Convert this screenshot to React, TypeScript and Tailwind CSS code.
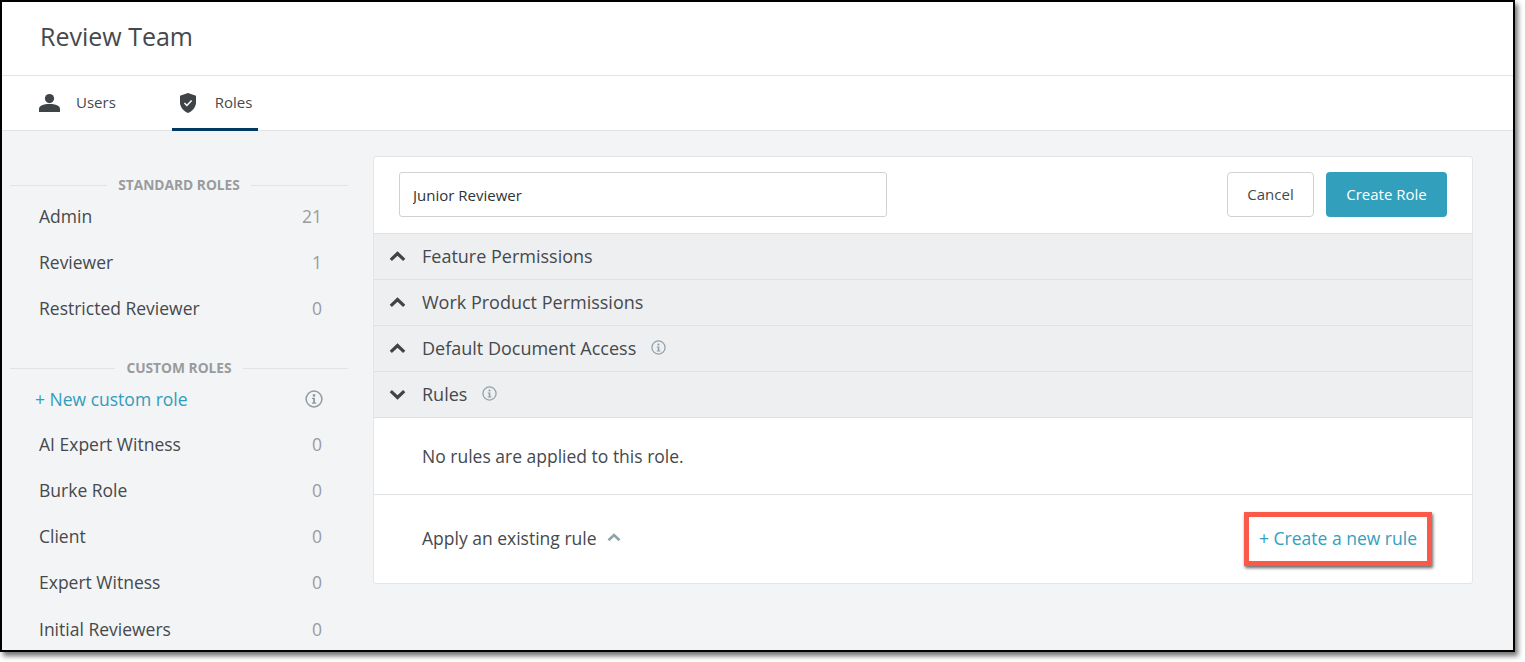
const standardRoles = [
  { name: 'Admin', count: 21 },
  { name: 'Reviewer', count: 1 },
  { name: 'Restricted Reviewer', count: 0 },
];

const customRoles = ['AI Expert Witness', 'Burke Role', 'Client', 'Expert Witness', 'Initial Reviewers'];

function InfoIcon({ className }: { className: string }) {
  return (
    <svg viewBox="0 0 18 18" fill="none" className={className}>
      <circle cx="9" cy="9" r="7.9" stroke="currentColor" strokeWidth="1.5" />
      <circle cx="9" cy="5.4" r="1.3" fill="currentColor" />
      <path d="M7 7.800h3v4.800h1.200v1.100H6.900v-1.100h1.200V8.900H7z" fill="currentColor" />
    </svg>
  );
}

function UserIcon() {
  return (
    <svg viewBox="0 0 21 18" className="h-[18px] w-[21px] fill-[#3f4447]">
      <circle cx="10.5" cy="4.6" r="4.6" />
      <path d="M0 15c0-3.4 4.4-5 10.5-5S21 11.6 21 15v3H0z" />
    </svg>
  );
}

function ShieldIcon() {
  return (
    <svg viewBox="0 0 16 20" className="h-5 w-4">
      <path d="M8 0l8 2.8v6.4c0 5-3.4 8.9-8 10.8-4.600-1.900-8-5.800-8-10.800V2.800z" fill="#3f4447" />
      <path d="M4.400 10l2.500 2.500 4.700-4.900" fill="none" stroke="#fff" strokeWidth="1.500" />
    </svg>
  );
}

// Chunky chevron, wider than the lucide one at the same stroke weight.
function Chevron({ down, className }: { down?: boolean; className: string }) {
  return (
    <svg viewBox="0 0 17 11" fill="none" className={className}>
      <path d={down ? 'M1.800 2.200l6.700 6.300 6.700-6.300' : 'M1.800 8.800l6.700-6.300 6.700 6.300'} stroke="currentColor" strokeWidth="3.200" />
    </svg>
  );
}

function SectionLabel({ label }: { label: string }) {
  return (
    <div className="flex items-center">
      <div className="h-px flex-1 bg-[#e1e3e5]" />
      <span className="px-[11px] text-[13.750px] font-bold leading-[18px] text-[#999b9d]">{label}</span>
      <div className="h-px flex-1 bg-[#e1e3e5]" />
    </div>
  );
}

function RoleRow({ name, count }: { name: string; count: number }) {
  return (
    <div className="flex h-[46px] items-center justify-between pl-[29px] pr-[26px] text-[17.500px] text-[#45494c]">
      <span>{name}</span>
      <span className="text-[#999c9e]">{count}</span>
    </div>
  );
}

function PermissionRow({ label, open, info }: { label: string; open?: boolean; info?: boolean }) {
  return (
    <div className="flex h-[46px] items-center border-b border-[#dfe1e3] bg-[#eeeff1] pl-[15px] text-[18px] text-[#45494c]">
      <Chevron down={open} className="h-[11px] w-[17px] text-[#3f4447]" />
      <span className="ml-[16px]">{label}</span>
      {info && <InfoIcon className="mb-[3px] ml-[15px] h-[15px] w-[15px] text-[#8fa0a6]" />}
    </div>
  );
}

export default function App() {
  return (
    <div className="h-[662px] bg-white font-['Open_Sans',sans-serif] antialiased">
      <div className="flex h-[652px] w-[1515px] flex-col overflow-hidden border-2 border-black bg-[#f3f4f6] shadow-[3px_4px_5px_rgba(0,0,0,0.55)]">
        <header className="flex h-[74px] shrink-0 items-center border-b border-[#e1e3e5] bg-white pb-[4px] pl-[38px] text-[25px] text-[#45494c]">
          Review Team
        </header>
        <nav className="flex h-[55px] shrink-0 border-b border-[#e1e3e5] bg-white pl-[37px] text-[15px] text-[#45494c]">
          <div className="flex items-center gap-[16px]">
            <UserIcon />
            <span className="pb-[2px]">Users</span>
          </div>
          <div className="relative ml-[56px] flex w-[86px] items-center pl-[8px]">
            <ShieldIcon />
            <span className="ml-[19px] pb-[2px]">Roles</span>
            <div className="absolute bottom-[-1px] left-0 h-[3px] w-full bg-[#003a63]" />
          </div>
        </nav>
        <div className="flex min-h-0 flex-1">
          <aside className="w-[346px] shrink-0 pl-[8px] pt-[45px]">
            <SectionLabel label="STANDARD ROLES" />
            <div className="-mt-[1px]">
              {standardRoles.map((role) => (
                <RoleRow key={role.name} name={role.name} count={role.count} />
              ))}
            </div>
            <div className="mt-[28px]">
              <SectionLabel label="CUSTOM ROLES" />
            </div>
            <div className="flex h-[44px] items-center justify-between px-[25px] text-[17.500px] text-[#2f9dbd]">
              <span>+ New custom role</span>
              <InfoIcon className="h-[18px] w-[18px] text-[#8f9ca1]" />
            </div>
            <div className="[&>*:last-child]:mt-[1px]">
              {customRoles.map((name) => (
                <RoleRow key={name} name={name} count={0} />
              ))}
            </div>
          </aside>
          <main className="flex-1 pl-[25px] pt-[25px]">
            <section className="w-[1100px] overflow-hidden rounded-[3px] border border-[#e3e5e7] bg-white">
              <div className="flex h-[77px] items-start justify-between border-b border-[#dfe1e3] px-[25px] pt-[15px]">
                <input
                  readOnly
                  value="Junior Reviewer"
                  className="h-[45px] w-[488px] rounded-[3px] border border-[#cfd2d4] pl-[13px] text-[15px] text-[#2f3336] outline-none"
                />
                <div className="flex gap-[12px]">
                  <button type="button" className="h-[45px] w-[87px] rounded-[4px] border border-[#cfd2d4] bg-white text-[15px] text-[#45494c]">
                    Cancel
                  </button>
                  <button type="button" className="h-[45px] w-[121px] rounded-[4px] bg-[#329fbd] text-[15px] text-white">
                    Create Role
                  </button>
                </div>
              </div>
              <PermissionRow label="Feature Permissions" />
              <PermissionRow label="Work Product Permissions" />
              <PermissionRow label="Default Document Access" info />
              <PermissionRow label="Rules" open info />
              <div className="flex h-[77px] items-center border-b border-[#dfe1e3] pl-[48px] text-[17.500px] text-[#45494c]">
                No rules are applied to this role.
              </div>
              <div className="flex h-[88px] items-center justify-between pl-[48px] pr-[40px] text-[17.500px]">
                <div className="mb-[2px] flex items-center text-[#45494c]">
                  <span>Apply an existing rule</span>
                  <Chevron className="mb-[1px] ml-[10px] h-[9px] w-[14px] text-[#8fa3aa]" />
                </div>
                <div className="flex h-[54px] w-[188px] items-center justify-center border-[5px] border-[#fb5a4b] pb-[2px] text-[#329fbd] shadow-[1px_2px_3px_rgba(0,0,0,0.6)]">
                  + Create a new rule
                </div>
              </div>
            </section>
          </main>
        </div>
      </div>
    </div>
  );
}
